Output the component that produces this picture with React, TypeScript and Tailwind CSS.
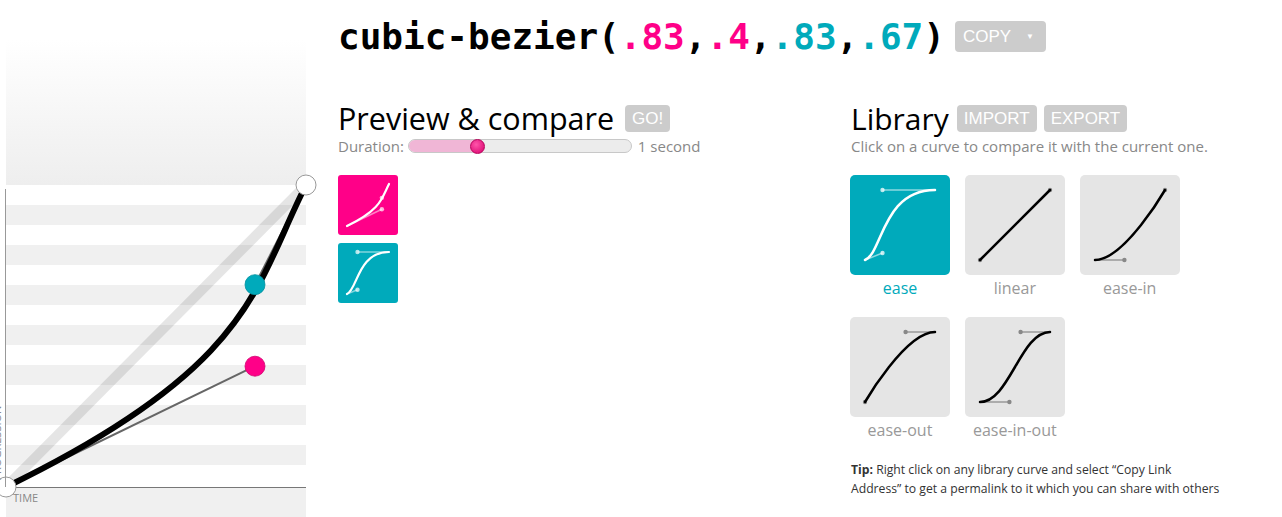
import React from "react";

type Bez = [number, number, number, number];

const PINK = "#ff0088";
const TEAL = "#00aabb";

type CurveProps = {
  box: number;
  pad: number;
  bez: Bez;
  curve: string;
  line: string;
  dot: string;
  width?: number;
};

function MiniCurve(props: CurveProps) {
  const { box, pad, bez, curve, line, dot, width = 2.5 } = props;
  const s = box - pad * 2;
  const x = (t: number) => pad + t * s;
  const y = (t: number) => box - pad - t * s;
  const [a, b, c, d] = bez;
  return (
    <svg width={box} height={box} viewBox={`0 0 ${box} ${box}`}>
      <line x1={x(0)} y1={y(0)} x2={x(a)} y2={y(b)} stroke={line} strokeWidth={1.5} />
      <line x1={x(1)} y1={y(1)} x2={x(c)} y2={y(d)} stroke={line} strokeWidth={1.5} />
      <circle cx={x(a)} cy={y(b)} r={2.2} fill={dot} />
      <circle cx={x(c)} cy={y(d)} r={2.2} fill={dot} />
      <path
        d={`M${x(0)} ${y(0)} C${x(a)} ${y(b)} ${x(c)} ${y(d)} ${x(1)} ${y(1)}`}
        fill="none"
        stroke={curve}
        strokeWidth={width}
        strokeLinecap="round"
      />
    </svg>
  );
}

const library: { name: string; bez: Bez }[] = [
  { name: "ease", bez: [0.25, 0.1, 0.25, 1] },
  { name: "linear", bez: [0, 0, 1, 1] },
  { name: "ease-in", bez: [0.42, 0, 1, 1] },
  { name: "ease-out", bez: [0, 0, 0.58, 1] },
  { name: "ease-in-out", bez: [0.42, 0, 0.58, 1] },
];

function Graph() {
  // graph box is 300 wide, 302 tall, origin at its top left
  const sx = (t: number) => t * 300;
  const sy = (t: number) => 302 - t * 302;
  const p1 = [sx(0.83), sy(0.4)];
  const p2 = [sx(0.83), sy(0.67)];
  return (
    <div className="relative w-[306px] shrink-0">
      <div className="h-[40px]" />
      <div className="ml-[6px] h-[145px] w-[300px] bg-gradient-to-b from-white to-[#eeeeee]" />
      <div className="relative ml-[6px] h-[302px] w-[300px]">
        {Array.from({ length: 15 }).map((_, i) => (
          <div key={i} className={i % 2 ? "h-[20px] bg-[#f0f0f0]" : "h-[20px] bg-white"} />
        ))}
        <svg className="absolute left-0 top-0 overflow-visible" width={300} height={302}>
          <line x1={0} y1={302} x2={300} y2={0} stroke="rgba(0,0,0,0.1)" strokeWidth={10} />
          <line x1={0} y1={302} x2={p1[0]} y2={p1[1]} stroke="#666" strokeWidth={2} />
          <line x1={300} y1={0} x2={p2[0]} y2={p2[1]} stroke="#666" strokeWidth={2} />
          <path
            d={`M0 302 C${p1[0]} ${p1[1]} ${p2[0]} ${p2[1]} 300 0`}
            fill="none"
            stroke="#000"
            strokeWidth={6}
          />
          <circle cx={p1[0]} cy={p1[1]} r={10} fill={PINK} stroke="#d0006e" strokeWidth={0.8} />
          <circle cx={p2[0]} cy={p2[1]} r={10} fill={TEAL} stroke="#008f9e" strokeWidth={0.8} />
          <circle cx={0} cy={302} r={10} fill="#fff" stroke="#999" strokeWidth={1} />
          <circle cx={300} cy={0} r={10} fill="#fff" stroke="#999" strokeWidth={1} />
        </svg>
      </div>
      <div className="ml-[6px] h-px w-[300px] bg-[#777]" />
      <div className="ml-[6px] h-[29px] w-[300px] bg-[#f0f0f0] pl-[7px] text-[11px] leading-[20px] text-[#888]">
        TIME
      </div>
      <div className="absolute left-[5px] top-[189px] h-[298px] w-px bg-[#999]" />
      <div className="absolute left-[-49px] top-[430px] w-[90px] -rotate-90 text-[11px] leading-[11px] text-[#888]">
        PROGRESSION
      </div>
    </div>
  );
}

function GrayButton({ children, className = "" }: { children: React.ReactNode; className?: string }) {
  return (
    <div
      className={`flex h-[27px] items-center rounded-[4px] bg-[#cccccc] px-[7px] text-[17px] text-white ${className}`}
      style={{ fontFamily: '"Liberation Sans", Arial, sans-serif' }}
    >
      {children}
    </div>
  );
}

export default function App() {
  return (
    <div
      className="flex h-[517px] w-[1282px] overflow-hidden bg-white"
      style={{ fontFamily: '"Open Sans", "Noto Sans", sans-serif' }}
    >
      <Graph />
      <div className="ml-[32px] flex flex-col pt-[21px]">
        <div className="flex h-[31px] items-center">
          <h1
            className="text-[36px] font-bold leading-none text-black"
            style={{ fontFamily: '"DejaVu Sans Mono", "Liberation Mono", monospace' }}
          >
            cubic-bezier(<span className="text-[#ff0088]">.83</span>,
            <span className="text-[#ff0088]">.4</span>,<span className="text-[#00aabb]">.83</span>,
            <span className="text-[#00aabb]">.67</span>)
          </h1>
          <div
            className="ml-[10px] flex h-[31px] w-[91px] items-center rounded-[4px] bg-[#cccccc] pl-[8px] text-[17px] text-white"
            style={{ fontFamily: '"Liberation Sans", Arial, sans-serif' }}
          >
            COPY
            <span className="ml-auto mr-[12px] text-[8px]">▼</span>
          </div>
        </div>

        <div className="mt-[53px] flex">
          <div className="w-[513px]">
            <div className="flex h-[27px] items-center">
              <h2 className="text-[30.5px] leading-[27px] text-black">Preview &amp; compare</h2>
              <GrayButton className="ml-[11px]">GO!</GrayButton>
            </div>
            <div className="mt-[6px] flex h-[16px] items-center text-[15px] leading-[16px] text-[#888]">
              <span>Duration:</span>
              <div className="relative ml-[4px] h-[14px] w-[224px] rounded-full border border-[#c8c8c8] bg-[#ececec]">
                <div className="h-full w-[70px] rounded-full bg-[#f0b6d6]" />
                <div className="absolute left-[61px] top-[-1px] h-[15px] w-[15px] rounded-full border border-[#b8005a] bg-[radial-gradient(circle_at_40%_35%,#ff55aa,#d8006c)]" />
              </div>
              <span className="ml-[6px]">1 second</span>
            </div>
            <div className="mt-[21px] flex flex-col gap-[8px]">
              <div className="h-[60px] w-[60px] rounded-[3px] bg-[#ff0088]">
                <MiniCurve
                  box={60}
                  pad={9}
                  bez={[0.83, 0.4, 0.83, 0.67]}
                  curve="#fff"
                  line="rgba(255,255,255,0.5)"
                  dot="rgba(255,255,255,0.7)"
                  width={2.2}
                />
              </div>
              <div className="h-[60px] w-[60px] rounded-[3px] bg-[#00aabb]">
                <MiniCurve
                  box={60}
                  pad={9}
                  bez={[0.25, 0.1, 0.25, 1]}
                  curve="#fff"
                  line="rgba(255,255,255,0.5)"
                  dot="rgba(255,255,255,0.7)"
                  width={2.2}
                />
              </div>
            </div>
          </div>

          <div className="flex flex-col">
            <div className="flex h-[27px] items-center">
              <h2 className="text-[30px] leading-[27px] text-black">Library</h2>
              <GrayButton className="ml-[8px]">IMPORT</GrayButton>
              <GrayButton className="ml-[7px]">EXPORT</GrayButton>
            </div>
            <p className="mt-[6px] h-[16px] text-[15px] leading-[16px] text-[#888]">
              Click on a curve to compare it with the current one.
            </p>
            <div className="-ml-px mt-[21px] grid w-[330px] grid-cols-3 gap-x-[14.5px]">
              {library.map((item, i) => (
                <div key={item.name} className="flex h-[142px] w-[100px] flex-col items-center">
                  <div
                    className={
                      i === 0
                        ? "h-[100px] w-[100px] rounded-[5px] bg-[#00aabb]"
                        : "h-[100px] w-[100px] rounded-[5px] bg-[#e5e5e5]"
                    }
                  >
                    <MiniCurve
                      box={100}
                      pad={15}
                      bez={item.bez}
                      curve={i === 0 ? "#fff" : "#000"}
                      line={i === 0 ? "rgba(255,255,255,0.55)" : "#999"}
                      dot={i === 0 ? "rgba(255,255,255,0.75)" : "#888"}
                    />
                  </div>
                  <span
                    className={
                      i === 0
                        ? "text-[16px] leading-[26px] text-[#00aabb]"
                        : "text-[16px] leading-[26px] text-[#999]"
                    }
                  >
                    {item.name}
                  </span>
                </div>
              ))}
            </div>
            <p className="mt-[1px] w-[372px] text-[12.2px] leading-[19px] text-[#333]">
              <b>Tip:</b> Right click on any library curve and select “Copy Link Address” to get a permalink to it
              which you can share with others
            </p>
          </div>
        </div>
      </div>
    </div>
  );
}
